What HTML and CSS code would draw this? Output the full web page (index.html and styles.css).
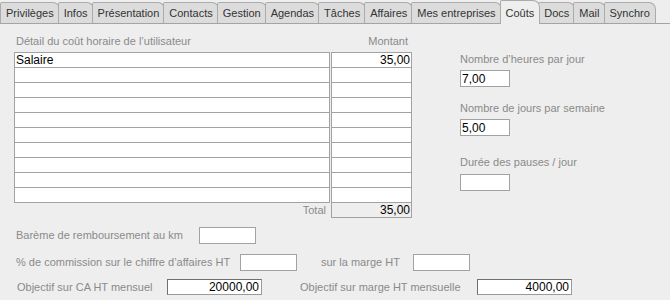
FILE: index.html
```html
<!DOCTYPE html>
<html lang="fr">
<head>
  <meta charset="UTF-8">
  <title>Coûts</title>
  <link rel="stylesheet" href="styles.css">
</head>
<body>
  <div class="tabs">
    <div class="tab">Privilèges</div>
    <div class="tab">Infos</div>
    <div class="tab">Présentation</div>
    <div class="tab">Contacts</div>
    <div class="tab">Gestion</div>
    <div class="tab">Agendas</div>
    <div class="tab">Tâches</div>
    <div class="tab">Affaires</div>
    <div class="tab">Mes entreprises</div>
    <div class="tab active">Coûts</div>
    <div class="tab">Docs</div>
    <div class="tab">Mail</div>
    <div class="tab">Synchro</div>
  </div>

  <div class="page">
    <div class="main">
      <div class="detail">
        <div class="detail-head">
          <span>Détail du coût horaire de l’utilisateur</span>
          <span>Montant</span>
        </div>
        <div class="grid">
          <div class="col-label">
            <div class="cells">
              <div class="cell">Salaire</div>
              <div class="cell"></div>
              <div class="cell"></div>
              <div class="cell"></div>
              <div class="cell"></div>
              <div class="cell"></div>
              <div class="cell"></div>
              <div class="cell"></div>
              <div class="cell"></div>
              <div class="cell"></div>
            </div>
            <div class="total-label">Total</div>
          </div>
          <div class="col-amount">
            <div class="cells">
              <div class="cell">35,00</div>
              <div class="cell"></div>
              <div class="cell"></div>
              <div class="cell"></div>
              <div class="cell"></div>
              <div class="cell"></div>
              <div class="cell"></div>
              <div class="cell"></div>
              <div class="cell"></div>
              <div class="cell"></div>
              <div class="cell total">35,00</div>
            </div>
          </div>
        </div>
      </div>

      <div class="params">
        <div class="param">
          <div class="label">Nombre d’heures par jour</div>
          <input class="field small" type="text" value="7,00">
        </div>
        <div class="param">
          <div class="label">Nombre de jours par semaine</div>
          <input class="field small" type="text" value="5,00">
        </div>
        <div class="param pause">
          <div class="label">Durée des pauses / jour</div>
          <input class="field small" type="text" value="">
        </div>
      </div>
    </div>

    <div class="row row-km">
      <span class="label km-label">Barème de remboursement au km</span>
      <input class="field mid" type="text" value="">
    </div>
    <div class="row row-com">
      <span class="label com-label">% de commission sur le chiffre d’affaires HT</span>
      <input class="field mid" type="text" value="">
      <span class="label marge-label">sur la marge HT</span>
      <input class="field mid" type="text" value="">
    </div>
    <div class="row row-obj">
      <span class="label ca-label">Objectif sur CA HT mensuel</span>
      <input class="field wide" type="text" value="20000,00">
      <span class="label obj-marge-label">Objectif sur marge HT mensuelle</span>
      <input class="field wide" type="text" value="4000,00">
    </div>
  </div>
</body>
</html>
```

FILE: styles.css
```css
body {
  margin: 0;
  padding: 0;
  background-color: #eeeeee;
  font-family: "Liberation Sans", Arial, sans-serif;
  font-size: 11px;
  color: #333;
}

/* onglets */
.tabs {
  display: flex;
  align-items: flex-end;
  height: 23px;
  border-bottom: 1px solid #a4a4a4;
}

.tab {
  height: 20px;
  line-height: 20px;
  padding: 0 5px;
  margin-right: -2px;
  background-color: #dcdcdc;
  border: 1px solid #ababab;
  border-bottom: none;
  border-radius: 2px 7px 0 0;
  color: #333;
  font-size: 11px;
  white-space: nowrap;
}

.tab.active {
  height: 23px;
  line-height: 24px;
  margin-bottom: -1px;
  background-color: #eeeeee;
  position: relative;
  z-index: 1;
}

.page {
  padding: 11px 0 0 14px;
}

.main {
  display: flex;
}

.label {
  color: #8a8a8a;
  font-size: 11px;
  line-height: 13px;
  white-space: nowrap;
}

/* tableau du détail */
.detail {
  width: 398px;
}

.detail-head {
  display: flex;
  justify-content: space-between;
  height: 13px;
  line-height: 13px;
  padding: 0 4px 0 2px;
  margin-bottom: 4px;
  color: #8a8a8a;
}

.grid {
  display: flex;
  gap: 1px;
}

.col-label {
  width: 316px;
}

.col-amount {
  width: 81px;
}

.cells {
  border: 1px solid #a2a2a2;
  border-bottom: none;
}

.cell {
  height: 14px;
  line-height: 15px;
  border-bottom: 1px solid #a2a2a2;
  background-color: #fff;
  color: #000;
  font-size: 12px;
  padding: 0 1px;
}

.col-amount .cell {
  text-align: right;
}

.cell.total {
  background-color: #eeeeee;
}

.total-label {
  height: 15px;
  line-height: 15px;
  text-align: right;
  padding-right: 4px;
  color: #8a8a8a;
}

/* paramètres de droite */
.params {
  margin-left: 48px;
  padding-top: 18px;
}

.param .label {
  margin-bottom: 4px;
}

.param + .param {
  margin-top: 15px;
}

.param.pause {
  margin-top: 20px;
}

.param.pause .label {
  margin-bottom: 5px;
}

.field {
  display: block;
  box-sizing: border-box;
  height: 17px;
  margin: 0;
  padding: 0 2px 0 1px;
  border: 1px solid #a2a2a2;
  background-color: #fff;
  font-family: "Liberation Sans", Arial, sans-serif;
  font-size: 12px;
  color: #000;
  outline: none;
}

.field.small {
  width: 50px;
}

.field.mid {
  width: 57px;
}

.field.wide {
  width: 95px;
  height: 16px;
  text-align: right;
  border-color: #6f6f6f #9a9a9a #9a9a9a #6f6f6f;
}

/* lignes du bas */
.row {
  display: flex;
  align-items: center;
}

.row-km {
  margin-top: 9px;
}

.row-com {
  margin-top: 10px;
}

.row-obj {
  margin-top: 8px;
}

.km-label {
  width: 183px;
  padding-left: 2px;
}

.com-label {
  width: 224px;
  padding-left: 2px;
}

.marge-label {
  width: 92px;
  padding-left: 24px;
}

.ca-label {
  width: 150px;
  padding-left: 3px;
}

.obj-marge-label {
  width: 177px;
  padding-left: 38px;
}
```
